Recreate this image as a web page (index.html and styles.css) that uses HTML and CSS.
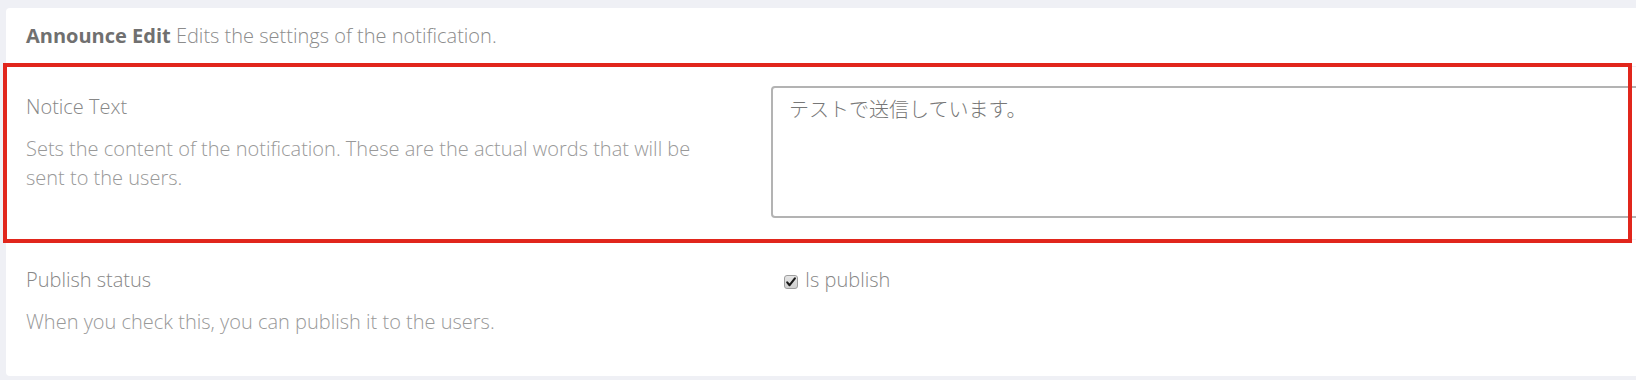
FILE: index.html
```html
<!DOCTYPE html>
<html lang="en">
<head>
<meta charset="utf-8">
<title>Announce Edit</title>
<link rel="stylesheet" href="styles.css">
</head>
<body>
<div class="card">
  <div class="card-header">
    <strong class="card-title">Announce Edit</strong>
    <span class="card-subtitle">Edits the settings of the notification.</span>
  </div>
  <div class="form-row">
    <div class="field-info">
      <div class="field-label">Notice Text</div>
      <p class="field-help">Sets the content of the notification. These are the actual words that will be sent to the users.</p>
    </div>
    <div class="field-control">
      <textarea class="text-input" lang="ja">テストで送信しています。</textarea>
    </div>
  </div>
  <div class="form-row form-row-last">
    <div class="field-info">
      <div class="field-label">Publish status</div>
      <p class="field-help">When you check this, you can publish it to the users.</p>
    </div>
    <div class="field-control">
      <label class="check">
        <span class="check-box">
          <svg width="14" height="14" viewBox="0 0 14 14">
            <defs>
              <linearGradient id="cbg" x1="0" y1="0" x2="0" y2="1">
                <stop offset="0" stop-color="#e6e6e6"/>
                <stop offset="1" stop-color="#cfcfcf"/>
              </linearGradient>
            </defs>
            <rect x="0.5" y="0.5" width="13" height="13" rx="2.5" fill="url(#cbg)" stroke="#9e9e9e"/>
            <path d="M3.2 7.4 L5.6 10.2 L10.9 3.4" fill="none" stroke="#1a1a1a" stroke-width="2.1" stroke-linecap="round" stroke-linejoin="round"/>
          </svg>
        </span>
        <span class="check-text">Is publish</span>
      </label>
    </div>
  </div>
  <div class="highlight"></div>
</div>
</body>
</html>
```

FILE: styles.css
```css
html, body {
  margin: 0;
  padding: 0;
  overflow: hidden;
}

body {
  background: #eff0f5;
  font-family: "Open Sans", "Noto Sans CJK JP", sans-serif;
  font-size: 20px;
  line-height: 28.57px;
  color: #8a8a8a;
  height: 380px;
}

.card {
  position: relative;
  margin: 8px -40px 0 6px;
  background: #ffffff;
  border-radius: 4px 0 0 4px;
}

.card-header {
  padding: 14px 20px 15px;
  border-bottom: 1px solid #eceef3;
}

.card-title {
  font-weight: 700;
  color: #707070;
}

.card-subtitle {
  font-weight: 300;
  color: #8c8c8c;
}

.form-row {
  display: grid;
  grid-template-columns: 700px 1fr;
  column-gap: 45px;
  padding: 19px 20px 21px;
  border-bottom: 1px solid #eef0f4;
}

.form-row-last {
  border-bottom: none;
}

.field-label {
  margin-top: 7px;
  font-weight: 300;
  color: #878787;
}

.field-help {
  margin: 14px 0 18px;
  font-weight: 300;
  color: #999999;
}

.field-control {
  min-width: 0;
}

.text-input {
  display: block;
  box-sizing: border-box;
  width: 920px;
  height: 132px;
  margin: 0;
  padding: 8px 16px;
  border: 2px solid #b3b3b3;
  border-radius: 4px;
  font-family: "Open Sans", "Noto Sans CJK JP", sans-serif;
  font-size: 20px;
  line-height: 28.57px;
  font-weight: 300;
  color: #777777;
  resize: none;
  background: #ffffff;
}

.check {
  display: flex;
  align-items: center;
  margin-top: 7px;
  padding-left: 13px;
}

.check-box {
  display: block;
  width: 14px;
  height: 14px;
  margin-top: 5px;
  margin-right: 7px;
}

.check-box svg {
  display: block;
}

.check-text {
  font-weight: 300;
  color: #878787;
}

.highlight {
  position: absolute;
  left: -3px;
  top: 55px;
  width: 1621px;
  height: 172px;
  border: 4px solid #e1261c;
  pointer-events: none;
}
```
